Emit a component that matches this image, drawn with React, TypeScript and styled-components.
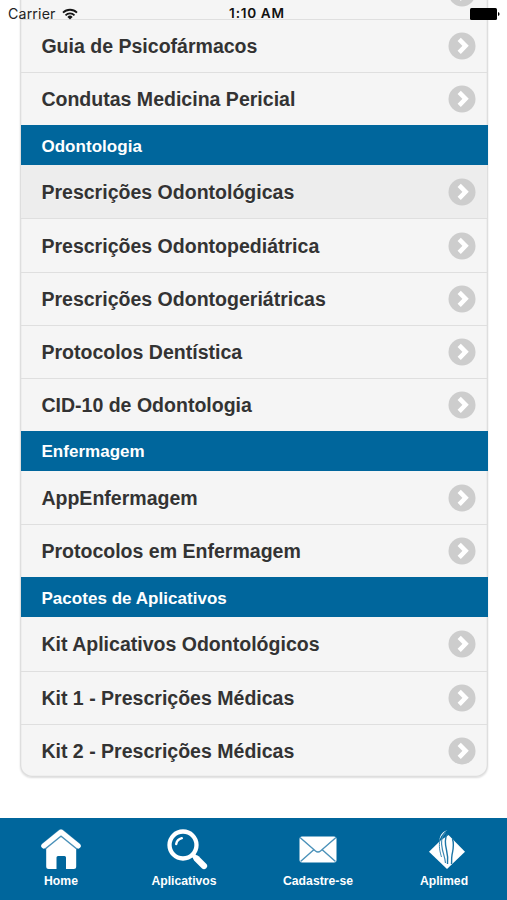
import React from "react";
import styled, { createGlobalStyle } from "styled-components";

const GlobalStyle = createGlobalStyle`
  * { box-sizing: border-box; }
  body { margin: 0; background: #fff; font-family: "Liberation Sans", Arial, sans-serif; }
`;

const Screen = styled.div`
  position: relative;
  width: 507px;
  height: 900px;
  overflow: hidden;
  display: flex;
  flex-direction: column;
  justify-content: space-between;
`;

const StatusBar = styled.header`
  position: absolute;
  z-index: 1;
  inset: 0 0 auto;
  height: 27px;
  padding: 0 7px 0 8px;
  display: grid;
  grid-template-columns: 1fr auto 1fr;
  align-items: center;
  font: 14.2px/27px Inter, sans-serif;
  color: #222;
`;

const Carrier = styled.div`
  display: flex;
  align-items: center;
  gap: 6px;
  letter-spacing: 0.15px;
`;

const Clock = styled.time`
  padding: 0 0 0 6px;
  font-weight: 600;
  font-size: 13.6px;
  letter-spacing: 0.8px;
  word-spacing: -0.5px;
  color: #111;
`;

const BatterySvg = styled.svg`
  justify-self: end;
`;

const List = styled.ul`
  list-style: none;
  width: 468px;
  margin: -34.1px 0 0 20px;
  padding: 0;
  background: #f5f5f5;
  border-radius: 0 0 12px 12px;
  box-shadow: inset 0 0 0 1.3px #dedede, 0 1px 2px rgba(0, 0, 0, 0.14);
`;

const Divider = styled.li`
  height: 40.2px;
  margin-left: 0.6px;
  padding: 3px 20.8px 0;
  display: flex;
  align-items: center;
  background: #00669c;
  color: #fff;
  font-size: 17px;
  font-weight: 700;
  letter-spacing: 0.04px;
`;

const Row = styled.li<{ $active?: boolean }>`
  height: 53.1px;
  margin: 0 1px;
  padding: 0 11px 0 20.4px;
  display: flex;
  align-items: center;
  justify-content: space-between;
  background: ${(p) => (p.$active ? "#ededed" : "transparent")};
  border-top: 1.5px solid #dfdfdf;
  color: #333;
  font-size: 19.55px;
  font-weight: 700;
  text-shadow: 0 1px 0 #f8f8f8;

  ${Divider} + & { border-top-color: transparent; }
`;

const RowLabel = styled.span`
  padding-top: 1px;
`;

const TabBar = styled.nav`
  height: 82px;
  flex: none;
  background: #00669c;
  display: grid;
  grid-template-columns: 122px 124px 144px 108px;
`;

const Tab = styled.div`
  display: flex;
  flex-direction: column;
  align-items: center;
  padding-top: 11px;
  gap: 3px;
  color: #fff;
  font-size: 12.2px;
  letter-spacing: 0.02px;
  line-height: 16px;
  font-weight: 700;
  white-space: nowrap;
`;

const IconSlot = styled.span<{ $shift: number }>`
  display: flex;
  margin-left: ${(p) => p.$shift}px;
`;

const Chevron = () => (
  <svg width="28" height="28" viewBox="0 0 28 28">
    <circle cx="14" cy="14" r="13.5" fill="#cdcdcd" />
    <path d="M11.2 7.3 17.6 13.8 11.2 20.3" fill="none" stroke="#fff" strokeWidth="4.5" />
  </svg>
);

const WifiIcon = () => (
  <svg width="16" height="12" viewBox="0 0 16 12" fill="none" stroke="#151515" strokeWidth="1.8">
    <path d="M1 4.6a10 10 0 0 1 14 0M3.5 7.3a6.4 6.4 0 0 1 9 0" />
    <path d="M8 11.5 5.4 8.9a3.7 3.7 0 0 1 5.2 0Z" fill="#151515" stroke="none" />
  </svg>
);

const BatteryIcon = () => (
  <BatterySvg width="30" height="12" viewBox="0 0 30 12">
    <rect width="27" height="12" rx="1.5" />
    <path d="M28 4q1.6.5 1.6 2T28 8Z" />
  </BatterySvg>
);

const HomeIcon = () => (
  <svg width="40" height="41" viewBox="0 0 40 41">
    <path d="M20 6 35.2 18V37.5q0 2.500-2.500 2.500H25V28.500q0-1.500-1.500-1.500h-6.500q-1.500 0-1.500 1.500V40H7.700q-2.500 0-2.500-2.500V18Z" fill="#fff" />
    <path d="M2.500 17.800 20 3.500 37.500 17.800" fill="none" stroke="#4a91b9" strokeWidth="6.800" strokeLinejoin="round" />
    <path d="M2.700 17 20 3 37.300 17" fill="none" stroke="#fff" strokeWidth="5" strokeLinecap="round" strokeLinejoin="round" />
  </svg>
);

const SearchIcon = () => (
  <svg width="41" height="41" viewBox="0 0 41 41" fill="none" stroke="#fff" strokeLinecap="round">
    <circle cx="16" cy="16" r="13.5" strokeWidth="4.3" />
    <path d="M9.2 15a7.500 7.500 0 0 1 5.600-5.800" strokeWidth="2.4" />
    <path d="m26 26 3 3" strokeWidth="4.5" />
    <path d="m29.500 29.500 7.500 7.500" strokeWidth="6.2" />
  </svg>
);

const MailIcon = () => (
  <svg width="38" height="41" viewBox="0 0 38 41">
    <rect x="0.5" y="7.5" width="37" height="26" rx="2.5" fill="#fff" />
    <path d="M1 8.500 16.500 22q2.500 2 5 0L37 8.500M1.500 32.500 14.500 21M36.500 32.500 23.500 21" fill="none" stroke="#4a91b9" strokeWidth="1.4" />
  </svg>
);

const AplimedIcon = () => (
  <svg width="38" height="41" viewBox="0 0 38 41">
    <path d="M12.500 11.500 1 22.800 19 40 37 22.800 20.500 6Z" fill="#fff" />
    <path d="M19.500 1C10 4 10.500 14 13 21c1.500 5 4 9 5 14L13 30C10 20 8.500 8 19.500 1Z" fill="#fff" />
    <path d="M17.500 3.500C12.500 8 13 15 14.500 21c1 4 2.500 8 3 13" fill="none" stroke="#3c88b2" strokeWidth="1.2" />
    <path d="M12 11C10.500 17 12 23 13.500 28" fill="none" stroke="#3c88b2" strokeWidth="1" />
    <path d="M19 5c-2.500 5-2 10-.5 16s1.500 9 1 14M24.500 10c2 6 .5 11-.5 16-.6 4-.2 6-.5 9" fill="none" stroke="#1c75a6" strokeWidth="1.4" />
  </svg>
);

type Entry = { label: string; kind?: "divider" | "active" };

const entries: Entry[] = [
  { label: "" },
  { label: "Guia de Psicofármacos" },
  { label: "Condutas Medicina Pericial" },
  { label: "Odontologia", kind: "divider" },
  { label: "Prescrições Odontológicas", kind: "active" },
  { label: "Prescrições Odontopediátrica" },
  { label: "Prescrições Odontogeriátricas" },
  { label: "Protocolos Dentística" },
  { label: "CID-10 de Odontologia" },
  { label: "Enfermagem", kind: "divider" },
  { label: "AppEnfermagem" },
  { label: "Protocolos em Enfermagem" },
  { label: "Pacotes de Aplicativos", kind: "divider" },
  { label: "Kit Aplicativos Odontológicos" },
  { label: "Kit 1 - Prescrições Médicas" },
  { label: "Kit 2 - Prescrições Médicas" },
];

const tabs = [
  { label: "Home", Icon: HomeIcon, shift: 0 },
  { label: "Aplicativos", Icon: SearchIcon, shift: 7 },
  { label: "Cadastre-se", Icon: MailIcon, shift: 0 },
  { label: "Aplimed", Icon: AplimedIcon, shift: 6 },
];

export default function App() {
  return (
    <Screen>
      <GlobalStyle />
      <StatusBar>
        <Carrier>Carrier <WifiIcon /></Carrier>
        <Clock>1:10 AM</Clock>
        <BatteryIcon />
      </StatusBar>
      <List>
        {entries.map(({ label, kind }, i) =>
          kind === "divider" ? (
            <Divider key={i}>{label}</Divider>
          ) : (
            <Row key={i} $active={kind === "active"}>
              <RowLabel>{label}</RowLabel>
              <Chevron />
            </Row>
          )
        )}
      </List>
      <TabBar>
        {tabs.map(({ label, Icon, shift }) => (
          <Tab key={label}>
            <IconSlot $shift={shift}><Icon /></IconSlot>
            {label}
          </Tab>
        ))}
      </TabBar>
    </Screen>
  );
}
